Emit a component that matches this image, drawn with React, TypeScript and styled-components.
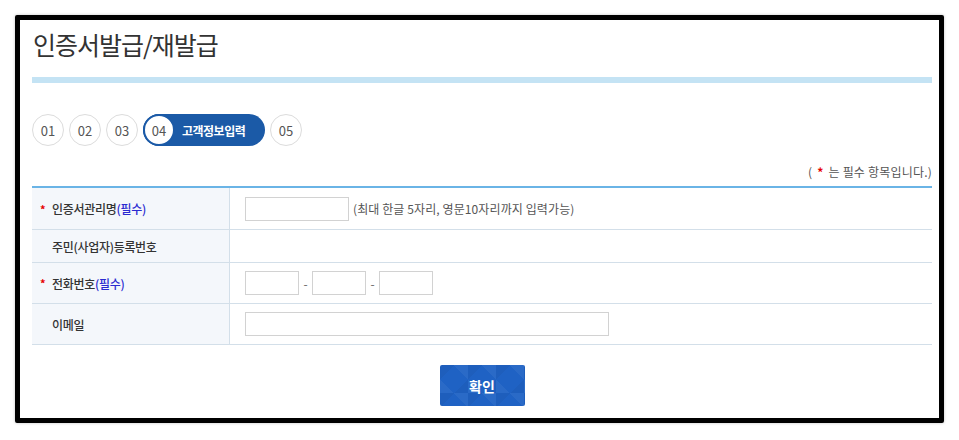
import React from "react";
import styled, { createGlobalStyle } from "styled-components";

const Global = createGlobalStyle`
  html, body { margin: 0; padding: 0; background: #fff; }
  body { font-family: "Noto Sans CJK KR", "Noto Sans", sans-serif; color: #333; }
  * { box-sizing: border-box; }
`;

const Frame = styled.div`
  margin: 15px;
  width: 929px;
  height: 408px;
  border: 5px solid #000;
  border-radius: 2px;
  box-shadow: 0 0 3px rgba(0,0,0,0.25);
  padding: 0 7px 0 12px;
  display: flex;
  flex-direction: column;
`;

const Title = styled.h1`
  margin: 9px 0 0 0;
  font-size: 25px;
  line-height: 30px;
  font-weight: 400;
  letter-spacing: -1px;
  color: #333;
  padding-left: 1px;
`;

const Bar = styled.div`
  margin-top: 18px;
  height: 6px;
  background: #c4e3f4;
`;

const Steps = styled.div`
  margin-top: 31px;
  display: flex;
  gap: 5px;
  align-items: center;
`;

const Circle = styled.div`
  width: 32px;
  height: 32px;
  border-radius: 50%;
  border: 1px solid #dcdcdc;
  display: flex;
  align-items: center;
  justify-content: center;
  font-size: 13px;
  color: #555;
  background: #fff;
`;

const Pill = styled.div`
  height: 32px;
  width: 122px;
  border-radius: 16px;
  background: #1b5aa7;
  display: flex;
  align-items: center;
`;

const PillNum = styled(Circle)`
  border: 2px solid #1b5aa7;
`;

const PillText = styled.span`
  margin-left: 7px;
  color: #fff;
  font-size: 12px;
  font-weight: 700;
  letter-spacing: -0.5px;
`;

const Note = styled.div`
  margin-top: 18px;
  text-align: right;
  font-size: 12px;
  line-height: 16px;
  color: #555;
  letter-spacing: 0.2px;
`;

const Star = styled.span`
  color: #e60000;
  font-weight: 700;
  margin: 0 5px;
`;

const Table = styled.div`
  margin-top: 6px;
  border-top: 2px solid #6ab4e6;
  display: grid;
  grid-template-columns: 198px 1fr;
`;

const Label = styled.div<{ $h: number }>`
  height: ${(p) => p.$h}px;
  background: #f4f7fb;
  border-bottom: 1px solid #d3dfe9;
  border-right: 1px solid #d3dfe9;
  display: flex;
  align-items: center;
  padding-left: 8px;
  font-size: 12px;
  font-weight: 500;
  letter-spacing: -0.3px;
  color: #333;
`;

const Req = styled.span`
  color: #e60000;
  width: 12px;
  font-size: 11px;
  font-weight: 700;
`;

const Blue = styled.span`
  color: #2a2ad0;
`;

const Spacer = styled.span`
  width: 12px;
`;

const Cell = styled.div<{ $h: number }>`
  height: ${(p) => p.$h}px;
  border-bottom: 1px solid #d3dfe9;
  display: flex;
  align-items: center;
  padding-left: 15px;
  gap: 4px;
  font-size: 12px;
  color: #555;
`;

const Hint = styled.span`
  letter-spacing: 0.1px;
`;

const Input = styled.input<{ $w: number }>`
  width: ${(p) => p.$w}px;
  height: 24px;
  border: 1px solid #d2d2d2;
  background: #fff;
  margin: 0;
  padding: 0 4px;
  outline: none;
`;

const Dash = styled.span`
  width: 13px;
  text-align: center;
  color: #666;
  font-size: 12px;
`;

const PhoneGroup = styled.div`
  display: flex;
  align-items: center;
`;

const Footer = styled.div`
  margin-top: 20px;
  display: flex;
  justify-content: center;
`;

const Button = styled.button`
  width: 85px;
  height: 41px;
  border: none;
  border-radius: 2px;
  color: #fff;
  font-family: "Noto Sans CJK KR", sans-serif;
  font-size: 14px;
  font-weight: 700;
  background-color: #1f62c4;
  background-image:
    linear-gradient(45deg, rgba(255,255,255,0.05) 25%, transparent 25%, transparent 75%, rgba(255,255,255,0.05) 75%),
    linear-gradient(-45deg, rgba(0,0,0,0.04) 25%, transparent 25%, transparent 75%, rgba(0,0,0,0.04) 75%);
  background-size: 28px 28px;
`;

export default function App() {
  return (
    <>
      <Global />
      <Frame>
        <Title>인증서발급/재발급</Title>
        <Bar />
        <Steps>
          <Circle>01</Circle>
          <Circle>02</Circle>
          <Circle>03</Circle>
          <Pill>
            <PillNum>04</PillNum>
            <PillText>고객정보입력</PillText>
          </Pill>
          <Circle>05</Circle>
        </Steps>
        <Note>
          (<Star>*</Star>는 필수 항목입니다.)
        </Note>
        <Table>
          <Label $h={42}>
            <Req>*</Req>인증서관리명<Blue>(필수)</Blue>
          </Label>
          <Cell $h={42}>
            <Input $w={104} />
            <Hint>(최대 한글 5자리, 영문10자리까지 입력가능)</Hint>
          </Cell>
          <Label $h={33}>
            <Spacer />주민(사업자)등록번호
          </Label>
          <Cell $h={33} />
          <Label $h={41}>
            <Req>*</Req>전화번호<Blue>(필수)</Blue>
          </Label>
          <Cell $h={41}>
            <PhoneGroup>
              <Input $w={54} />
              <Dash>-</Dash>
              <Input $w={54} />
              <Dash>-</Dash>
              <Input $w={54} />
            </PhoneGroup>
          </Cell>
          <Label $h={41}>
            <Spacer />이메일
          </Label>
          <Cell $h={41}>
            <Input $w={364} />
          </Cell>
        </Table>
        <Footer>
          <Button>확인</Button>
        </Footer>
      </Frame>
    </>
  );
}
